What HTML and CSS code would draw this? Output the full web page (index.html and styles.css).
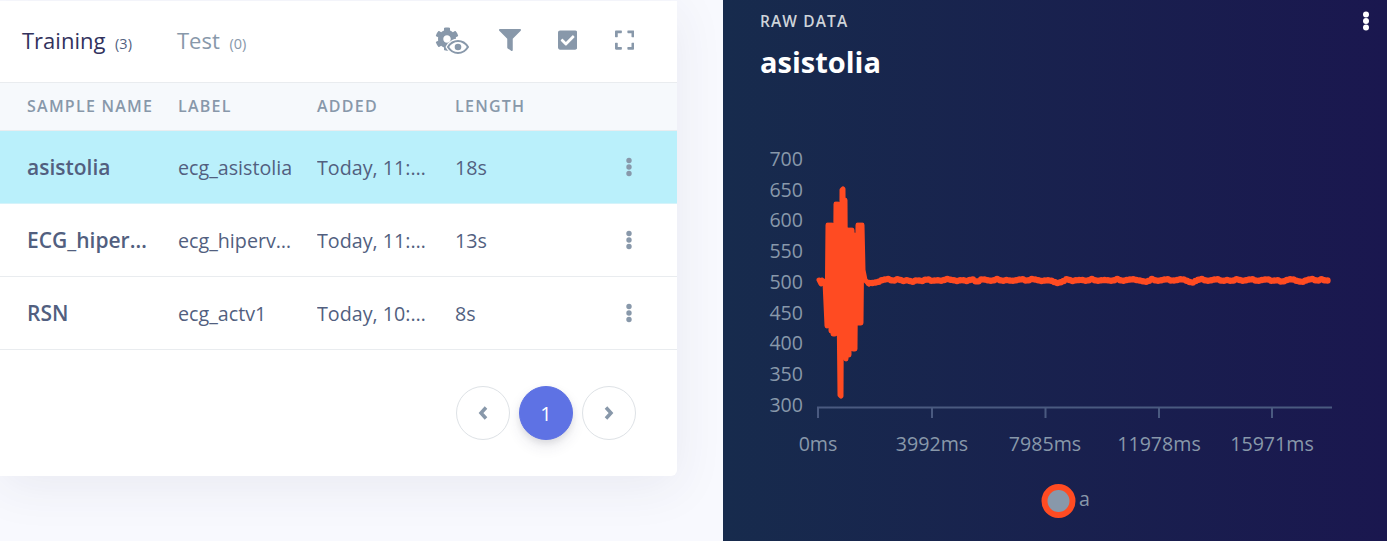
FILE: index.html
```html
<html>
<head>
  <title>Data acquisition</title>
  <link rel="stylesheet" href="styles.css">
</head>
<body>
  <div class="page">
    <div class="left">
      <div class="card">
        <div class="tabs">
          <div class="tab tab-active">Training <small>(3)</small></div>
          <div class="tab">Test <small>(0)</small></div>
          <div class="tools">
            <svg class="icon-cog" viewBox="0 0 34 27" width="34" height="27">
              <path transform="scale(0.0469)" d="M487.4 315.7l-42.6-24.6c4.3-23.2 4.3-47 0-70.2l42.6-24.6c4.9-2.8 7.1-8.6 5.5-14-11.1-35.6-30-67.8-54.7-94.6-3.8-4.1-10-5.1-14.8-2.3L380.8 110c-17.9-15.4-38.5-27.3-60.8-35.1V25.8c0-5.6-3.9-10.5-9.4-11.7-36.7-8.2-74.3-7.8-109.2 0-5.5 1.2-9.4 6.1-9.4 11.7V75c-22.2 7.9-42.8 19.8-60.8 35.1L88.7 85.5c-4.9-2.8-11-1.9-14.8 2.3-24.7 26.7-43.6 58.9-54.7 94.6-1.7 5.4.6 11.2 5.5 14L67.3 221c-4.3 23.2-4.3 47 0 70.2l-42.6 24.6c-4.9 2.8-7.1 8.6-5.5 14 11.1 35.6 30 67.8 54.7 94.6 3.8 4.1 10 5.1 14.8 2.3l42.6-24.6c17.9 15.4 38.5 27.3 60.8 35.1v49.2c0 5.6 3.9 10.5 9.4 11.7 36.7 8.2 74.3 7.8 109.2 0 5.5-1.2 9.4-6.1 9.4-11.7v-49.2c22.2-7.9 42.8-19.8 60.8-35.1l42.6 24.6c4.9 2.8 11 1.9 14.8-2.3 24.7-26.7 43.6-58.9 54.7-94.6 1.5-5.5-.7-11.3-5.6-14.100zM256 336c-44.100 0-80-35.900-80-80s35.900-80 80-80 80 35.900 80 80-35.900 80-80 80z"/>
              <path d="M10.500 20C13.500 14.500 18 11.500 23 11.500S32 14.500 35 20C32 25.500 28 28 23 28S13.500 25.500 10.500 20z" fill="#fff"/>
              <path d="M13 20C15.500 16 19 14 23 14s7.500 2 10 6C30.500 24 27 26 23 26s-7.500-2-10-6z" fill="#fff" stroke="#8898aa" stroke-width="2"/>
              <circle cx="23" cy="20" r="3.300"/>
            </svg>
            <svg class="icon-filter" viewBox="0 0 512 512" width="22" height="22"><path d="M487.976 0H24.028C2.71 0-8.047 25.866 7.058 40.971L192 225.941V432c0 7.831 3.821 15.17 10.237 19.662l80 55.98C298.02 518.69 320 507.493 320 487.98V225.941l184.947-184.97C520.021 25.896 509.338 0 487.976 0z"/></svg>
            <svg class="icon-check" viewBox="0 0 448 512" width="19.250" height="22"><path d="M400 480H48c-26.51 0-48-21.49-48-48V80c0-26.51 21.49-48 48-48h352c26.51 0 48 21.49 48 48v352c0 26.51-21.49 48-48 48zm-204.686-98.059l184-184c6.248-6.248 6.248-16.379 0-22.627l-22.627-22.627c-6.248-6.248-16.379-6.249-22.628 0L184 302.745l-70.059-70.059c-6.248-6.248-16.379-6.248-22.628 0l-22.627 22.627c-6.248 6.248-6.248 16.379 0 22.627l104 104c6.249 6.25 16.379 6.25 22.628.001z"/></svg>
            <svg class="icon-expand" viewBox="0 0 448 512" width="19.250" height="22"><path d="M0 180V56c0-13.3 10.7-24 24-24h124c6.6 0 12 5.400 12 12v40c0 6.600-5.400 12-12 12H64v84c0 6.600-5.400 12-12 12H12c-6.600 0-12-5.400-12-12zM288 44v40c0 6.600 5.400 12 12 12h84v84c0 6.600 5.400 12 12 12h40c6.600 0 12-5.400 12-12V56c0-13.300-10.700-24-24-24H300c-6.600 0-12 5.400-12 12zm148 276h-40c-6.600 0-12 5.400-12 12v84h-84c-6.600 0-12 5.400-12 12v40c0 6.600 5.400 12 12 12h124c13.300 0 24-10.700 24-24V332c0-6.600-5.400-12-12-12zM160 468v-40c0-6.600-5.400-12-12-12H64v-84c0-6.600-5.400-12-12-12H12c-6.600 0-12 5.400-12 12v124c0 13.300 10.700 24 24 24h124c6.600 0 12-5.400 12-12z"/></svg>
          </div>
        </div>

        <div class="row row-head">
          <div class="cell">Sample name</div>
          <div class="cell">Label</div>
          <div class="cell">Added</div>
          <div class="cell">Length</div>
        </div>
        <div class="row row-selected">
          <div class="cell cell-name">asistolia</div>
          <div class="cell cell-label">ecg_asistolia</div>
          <div class="cell">Today, 11:34:12</div>
          <div class="cell">18s</div>
          <svg class="kebab" viewBox="0 0 8 20" width="8" height="20"><circle cx="4" cy="3.500" r="2.700"/><circle cx="4" cy="10" r="2.700"/><circle cx="4" cy="16.500" r="2.700"/></svg>
        </div>
        <div class="row">
          <div class="cell cell-name">ECG_hipervolemia</div>
          <div class="cell cell-label">ecg_hipervolemia</div>
          <div class="cell">Today, 11:20:45</div>
          <div class="cell">13s</div>
          <svg class="kebab" viewBox="0 0 8 20" width="8" height="20"><circle cx="4" cy="3.500" r="2.700"/><circle cx="4" cy="10" r="2.700"/><circle cx="4" cy="16.500" r="2.700"/></svg>
        </div>
        <div class="row">
          <div class="cell cell-name">RSN</div>
          <div class="cell cell-label">ecg_actv1</div>
          <div class="cell">Today, 10:58:03</div>
          <div class="cell">8s</div>
          <svg class="kebab" viewBox="0 0 8 20" width="8" height="20"><circle cx="4" cy="3.500" r="2.700"/><circle cx="4" cy="10" r="2.700"/><circle cx="4" cy="16.500" r="2.700"/></svg>
        </div>

        <div class="pager">
          <div class="page-btn">
            <svg viewBox="0 0 10 14" width="10" height="14"><polyline points="8,1.500 3,7 8,12.500"/></svg>
          </div>
          <div class="page-btn page-active">1</div>
          <div class="page-btn">
            <svg viewBox="0 0 10 14" width="10" height="14"><polyline points="2,1.500 7,7 2,12.500"/></svg>
          </div>
        </div>
      </div>
    </div>

    <div class="right">
      <svg class="panel-menu" viewBox="0 0 8 20" width="8" height="20"><circle cx="4" cy="3.500" r="3"/><circle cx="4" cy="10" r="3"/><circle cx="4" cy="16.500" r="3"/></svg>
      <div class="panel-label">Raw data</div>
      <div class="panel-title">asistolia</div>

      <svg class="chart" viewBox="723 140 664 401" width="664" height="401">
        <g class="y-labels">
          <text x="803" y="166">700</text>
          <text x="803" y="197">650</text>
          <text x="803" y="227">600</text>
          <text x="803" y="258">550</text>
          <text x="803" y="289">500</text>
          <text x="803" y="320">450</text>
          <text x="803" y="350">400</text>
          <text x="803" y="381">350</text>
          <text x="803" y="412">300</text>
        </g>
        <path class="axis" d="M818 418V407.500H1332M932 407.500V418M1045.500 407.500V418M1159 407.500V418M1272 407.500V418"/>
        <g class="x-labels">
          <text x="818" y="451">0ms</text>
          <text x="932" y="451">3992ms</text>
          <text x="1045" y="451">7985ms</text>
          <text x="1159" y="451">11978ms</text>
          <text x="1272" y="451">15971ms</text>
        </g>
        <polyline class="signal" points="819,280 821,284 822,280 825,282 827,326 828,225 829,325 830,225 831,331 832,225 833,334 834,250 835,334 836,204 837,330 838,204 839,300 840,395 841,396 842,190 843,189 844,340 845,200 846,359 847,300 848,230 849,355 850,230 851,340 852,230 853,349 854,235 855,349 856,235 857,323 858,225 859,323 860,225 861,323 862,225 863,270 865,280 869,284"/>
        <polyline class="signal signal-flat" points="869,283 873,283 878,282 882,280 888,279 893,281 898,279 903,281 908,280 912,282 917,280 922,281 927,279 932,281 937,280 942,281 947,279 952,280 957,281 962,280 967,281 972,279 977,282 982,279 987,280 992,281 997,279 1002,281 1007,280 1012,281 1017,280 1022,279 1027,281 1032,279 1037,280 1042,281 1047,280 1052,281 1057,283 1062,282 1067,279 1072,281 1077,280 1082,280 1087,281 1092,279 1097,281 1102,280 1107,280 1112,281 1117,279 1122,281 1127,280 1132,279 1137,280 1142,281 1147,282 1152,279 1157,281 1162,280 1167,279 1172,281 1177,280 1182,279 1187,281 1192,283 1197,280 1202,279 1207,281 1212,280 1217,279 1222,281 1227,280 1232,281 1237,279 1242,281 1247,280 1252,279 1257,281 1262,280 1267,279 1272,281 1277,280 1282,282 1287,280 1292,279 1297,281 1302,282 1307,280 1312,279 1317,281 1322,279 1326,281 1329,280"/>
        <circle class="legend-dot" cx="1058.500" cy="501" r="14"/>
        <text class="legend-text" x="1079" y="506">a</text>
      </svg>
    </div>
  </div>
</body>
</html>
```

FILE: styles.css
```css
html, body {
  margin: 0;
  height: 100%;
  overflow: hidden;
}

body {
  font-family: "Open Sans", Arial, sans-serif;
  color: #525f7f;
}

.page {
  display: flex;
  height: 541px;
}

.left {
  width: 723px;
  flex: none;
  padding-top: 1px;
  box-sizing: border-box;
  background-color: #f8f9fe;
}

.card {
  width: 677px;
  height: 475px;
  background-color: #fff;
  border-radius: 0 0 6px 0;
  box-shadow: 0 10px 50px rgba(50, 50, 93, 0.08);
}

.tabs {
  display: flex;
  align-items: center;
  height: 77px;
  padding: 0 0 4px 22px;
  border-bottom: 1px solid #e9ecef;
}

.tab {
  font-size: 22px;
  font-weight: 500;
  color: #8898aa;
  margin-right: 45px;
}

.tab small {
  font-size: 14.500px;
  font-weight: 400;
  margin-left: 4px;
}

.tab-active {
  color: #32325d;
}

.tab-active small {
  color: #525f7f;
}

.tools {
  display: flex;
  align-items: center;
  margin: 1px 43px 0 auto;
  gap: 37.500px;
}

.tools svg {
  fill: #8898aa;
  display: block;
}

.tools .icon-cog {
  margin-right: -7.500px;
}

.row {
  display: grid;
  grid-template-columns: 151px 139px 138px 167px 14px;
  align-items: center;
  height: 72px;
  padding-left: 27px;
  font-size: 19.700px;
  border-bottom: 1px solid #e9ecef;
}

.row-head {
  height: 45px;
  padding-bottom: 2px;
  background-color: #f6f9fc;
  color: #8898aa;
  font-size: 16px;
  font-weight: 600;
  letter-spacing: 1.250px;
  text-transform: uppercase;
}

.row-selected {
  background-color: #baf0fb;
  border-bottom-color: #d5f3fa;
}

.cell {
  padding-right: 26px;
  white-space: nowrap;
  overflow: hidden;
  text-overflow: ellipsis;
}

.row-head .cell {
  padding-right: 0;
  overflow: visible;
}

.cell-name {
  font-size: 21px;
  font-weight: 600;
}

.cell-label {
  padding-right: 22px;
}

.kebab {
  fill: #8898aa;
  justify-self: center;
}

.pager {
  display: flex;
  justify-content: flex-end;
  gap: 9px;
  padding: 36px 41px 0 0;
}

.page-btn {
  display: flex;
  align-items: center;
  justify-content: center;
  width: 54px;
  height: 54px;
  box-sizing: border-box;
  border: 1px solid #dee2e6;
  border-radius: 50%;
  font-size: 20px;
  color: #fff;
}

.page-btn svg {
  fill: none;
  stroke: #8898aa;
  stroke-width: 3.500;
}

.page-active {
  background-color: #5e72e4;
  border-color: #5e72e4;
  box-shadow: 0 7px 14px rgba(50, 50, 93, 0.1), 0 3px 6px rgba(0, 0, 0, 0.08);
}

.right {
  position: relative;
  flex: 1;
  background: linear-gradient(90deg, #172b4d 0%, #1a174f 100%);
}

.panel-menu {
  position: absolute;
  top: 11px;
  right: 17px;
  fill: #fff;
}

.panel-label {
  padding: 12px 0 0 37px;
  font-size: 15.500px;
  line-height: 19px;
  font-weight: 600;
  letter-spacing: 1.100px;
  text-transform: uppercase;
  color: #ced4da;
}

.panel-title {
  padding: 10px 0 0 37px;
  font-size: 29px;
  line-height: 42px;
  font-weight: 700;
  color: #fff;
}

.chart {
  display: block;
  position: absolute;
  left: 0;
  top: 140px;
}

.chart text {
  font-family: "Open Sans", Arial, sans-serif;
  font-size: 19.600px;
  fill: #8898aa;
}

.y-labels text {
  text-anchor: end;
}

.x-labels text {
  text-anchor: middle;
}

.axis {
  fill: none;
  stroke: #4a5a80;
  stroke-width: 2;
}

.signal {
  fill: none;
  stroke: #ff4b22;
  stroke-width: 5;
  stroke-linejoin: round;
  stroke-linecap: round;
}

.signal-flat {
  stroke-width: 6.500;
  stroke-dasharray: 0 3.300;
}

.legend-dot {
  fill: #8898aa;
  stroke: #ff4b22;
  stroke-width: 6;
}
```
